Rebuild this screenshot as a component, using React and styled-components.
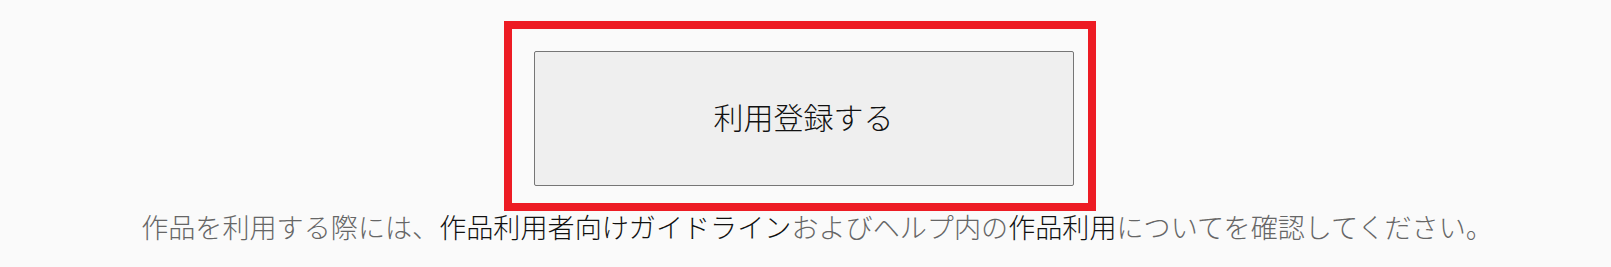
import React from 'react';
import styled, { createGlobalStyle } from 'styled-components';

const GlobalStyle = createGlobalStyle`
  body {
    margin: 0;
    background: #fafafa;
    font-family: 'Noto Sans CJK JP', 'Noto Sans', sans-serif;
  }
`

const Page = styled.div`
  width: 1611px;
  height: 267px;
  display: flex;
  flex-direction: column;
  align-items: center;
  padding-top: 21px;
  box-sizing: border-box;
`
const Highlight = styled.div`
  border: 8px solid #ed1c24;
  padding: 22px 14px 17px 22px;
  margin-right: 12px;
  display: flex;
`
const SignupButton = styled.button`
  width: 540px;
  height: 135px;
  background: #efefef;
  border: 1px solid #767676;
  border-radius: 2px;
  font-family: 'Noto Sans CJK JP', sans-serif;
  font-size: 30px;
  font-weight: 300;
  color: #111;
  display: flex;
  align-items: center;
  justify-content: center;
  padding: 0 0 5px;
`
const Note = styled.p`
  margin: 2px 0 0 23px;
  font-size: 27.1px;
  font-weight: 300;
  line-height: 1;
  color: #666;
  white-space: nowrap;
`
const NoteLink = styled.a`
  color: #111;
  text-decoration: none;
`

function App() {
  return (
    <>
      <GlobalStyle />
      <Page>
        <Highlight>
          <SignupButton>利用登録する</SignupButton>
        </Highlight>
        <Note>
          作品を利用する際には、<NoteLink href="#">作品利用者向けガイドライン</NoteLink>およびヘルプ内の<NoteLink href="#">作品利用</NoteLink>についてを確認してください。
        </Note>
      </Page>
    </>
  );
}

export default App;
